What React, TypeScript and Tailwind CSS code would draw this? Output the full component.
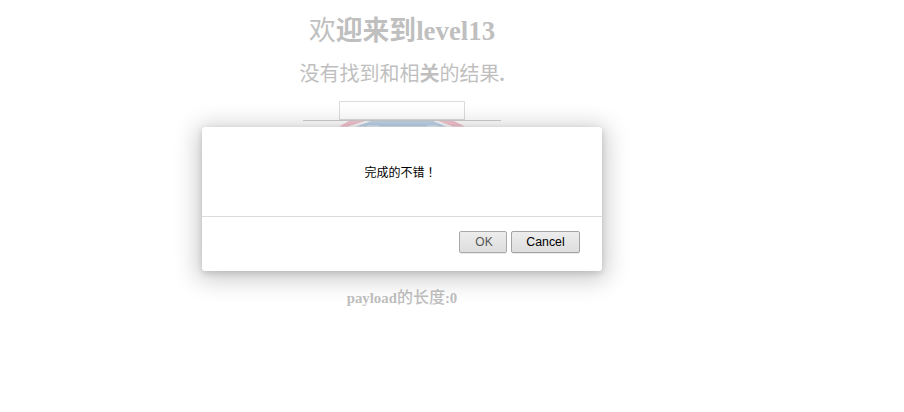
import React from 'react';

function Artwork() {
  return (
    <svg className="block" width="198" height="60" viewBox="0 0 198 60">
      <path d="M46 1H63L45 6.5H36Z" fill="#f6c4d0" />
      <path d="M133 1H151L162 6.5H150Z" fill="#f6c4d0" />
      <path d="M63 1H68L53 6.5H45Z" fill="#fbfdff" />
      <path d="M130 1H135L150 6.5H143Z" fill="#fbfdff" />
      <path d="M68 1H130L143 6.5H53Z" fill="#bfd5ea" />
      <path d="M65 5.5H76V6.5H63ZM124 5.5H134L136 6.5H124Z" fill="#f2fafd" />
      <rect x="0" y="0" width="198" height="1" fill="#cdcdcd" />
    </svg>
  );
}

function Dialog() {
  return (
    <div className="absolute left-[202px] top-[127px] flex h-[144px] w-[400px] flex-col rounded-[3px] bg-white font-['Liberation_Sans','Noto_Sans_CJK_SC',sans-serif] text-[12px] text-black shadow-[0_4px_23px_5px_rgba(0,0,0,0.2),0_2px_6px_rgba(0,0,0,0.15)]">
      <p className="flex h-[90px] shrink-0 items-center justify-center border-b border-[#dcdce0] pt-[2px] leading-[18px]">
        完成的不错<span className="ml-[3px]">！</span>
      </p>
      <div className="flex justify-end gap-1 pr-[22px] pt-[14px] text-[12px] leading-[20px]">
        <button className="h-[22px] w-[48px] rounded-[2px] border border-[#a9a9a9] bg-linear-to-b from-[#ededed] to-[#dedede] pl-[2px] text-[#555] shadow-[0_1px_0_rgba(0,0,0,0.08)]">
          OK
        </button>
        <button className="h-[22px] w-[69px] rounded-[2px] border border-[#a3a3a3] bg-linear-to-b from-[#ededed] to-[#dedede] text-[12.3px] text-black shadow-[0_1px_0_rgba(0,0,0,0.08)]">
          Cancel
        </button>
      </div>
    </div>
  );
}

export default function App() {
  return (
    <div className="relative h-[412px] w-[904px] overflow-hidden bg-white">
      <main className="flex w-[804px] flex-col items-center whitespace-nowrap font-['Liberation_Serif','Noto_Sans_CJK_SC',serif] text-[#bfbfbf]">
        <h1 className="mt-[14px] h-[34px] text-[26.8px] font-bold leading-[34px]">
          <span className="font-normal">欢</span>迎来到level13
        </h1>
        <h2 className="mt-[12px] h-[28px] text-[20px] leading-[28px]">
          没有找到和相<span className="font-bold">关</span>的结果<span className="font-bold">.</span>
        </h2>
        <div className="mt-[13px] h-[19px] w-[126px] border border-[#dcdcdc] bg-white" />
        <Artwork />
        <h3 className="mt-[108px] text-[14.8px] font-bold leading-[20px]">
          payload<span className="text-[16px] font-medium">的长度</span>:0
        </h3>
      </main>
      <Dialog />
    </div>
  );
}
